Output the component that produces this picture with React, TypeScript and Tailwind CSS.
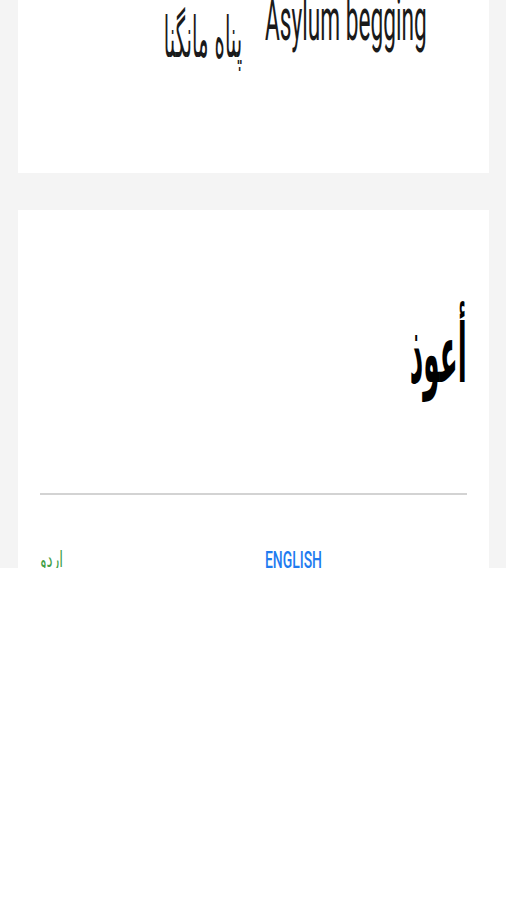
import React from 'react';

const roboto = { fontFamily: 'Roboto, "Liberation Sans", sans-serif' };
const arabic = { fontFamily: '"DejaVu Sans", sans-serif' };

const App: React.FC = () => {
  return (
    <div className="min-h-[900px] bg-white">
      <div className="h-[568px] overflow-hidden bg-[#f4f4f4] pl-[18px] pr-[17px] flex flex-col gap-[37px]">
        {/* Upper card, scrolled partly out of view */}
        <div className="h-[173px] shrink-0 bg-white">
          <div className="flex justify-end items-start pr-[63px] gap-[23px] -mt-[15px]">
            <div className="w-[77px] h-[90px] pt-[18px] flex justify-end">
              <span
                dir="rtl"
                className="block text-[56px] leading-[70px] text-[#1a1a1a] whitespace-nowrap origin-right scale-x-[0.35]"
                style={arabic}
              >
                پناه مانگنا
              </span>
            </div>
            <div className="w-[161px]">
              <span
                className="block text-[60px] leading-[70px] text-[#1a1a1a] whitespace-nowrap origin-left scale-x-[0.378]"
                style={roboto}
              >
                Asylum begging
              </span>
            </div>
          </div>
        </div>

        {/* Word card */}
        <div className="shrink-0 bg-white px-[22px] pt-[84px]">
          <div className="flex justify-end h-[116px]">
            <span
              dir="rtl"
              className="block text-[82px] leading-[120px] font-bold text-black whitespace-nowrap origin-right scale-x-[0.32]"
              style={arabic}
            >
              أعوذ
            </span>
          </div>
          <div className="mt-[83px] h-[2px] bg-[#d3d3d3]" />
          <div className="grid grid-cols-[225px_1fr] pt-[50px]">
            <div className="w-[22px] flex justify-start">
              <span
                dir="rtl"
                className="block text-[22px] leading-[30px] text-[#43a047] whitespace-nowrap origin-left scale-x-[0.62]"
                style={arabic}
              >
                اردو
              </span>
            </div>
            <div>
              <span
                className="block text-[24px] leading-[30px] font-medium text-[#1e7bf0] whitespace-nowrap origin-left scale-x-[0.58]"
                style={roboto}
              >
                ENGLISH
              </span>
            </div>
          </div>
        </div>
      </div>
    </div>
  );
};

export default App;
